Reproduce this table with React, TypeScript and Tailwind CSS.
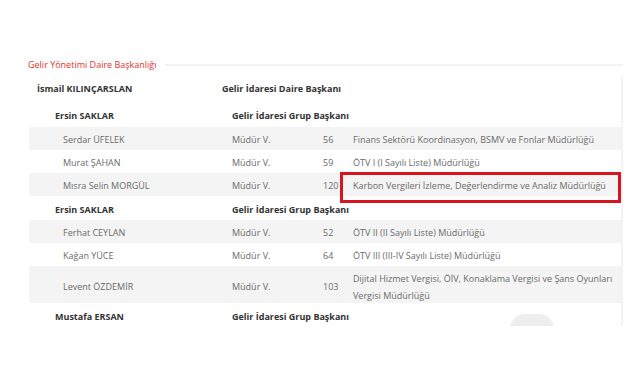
import React from "react";

type Row =
  | { kind: "head"; level: 0 | 1; name: string; title: string; tall?: boolean }
  | { kind: "unit"; name: string; title: string; no: string; unit: string[]; mark?: boolean; tall?: boolean };

const ROWS: Row[] = [
  { kind: "head", level: 0, name: "İsmail KILINÇARSLAN", title: "Gelir İdaresi Daire Başkanı" },
  { kind: "head", level: 1, name: "Ersin SAKLAR", title: "Gelir İdaresi Grup Başkanı", tall: true },
  { kind: "unit", name: "Serdar ÜFELEK", title: "Müdür V.", no: "56", unit: ["Finans Sektörü Koordinasyon, BSMV ve Fonlar Müdürlüğü"] },
  { kind: "unit", name: "Murat ŞAHAN", title: "Müdür V.", no: "59", unit: ["ÖTV I (I Sayılı Liste) Müdürlüğü"] },
  { kind: "unit", name: "Mısra Selin MORGÜL", title: "Müdür V.", no: "120", unit: ["Karbon Vergileri İzleme, Değerlendirme ve Analiz Müdürlüğü"], mark: true },
  { kind: "head", level: 1, name: "Ersin SAKLAR", title: "Gelir İdaresi Grup Başkanı" },
  { kind: "unit", name: "Ferhat CEYLAN", title: "Müdür V.", no: "52", unit: ["ÖTV II (II Sayılı Liste) Müdürlüğü"] },
  { kind: "unit", name: "Kağan YÜCE", title: "Müdür V.", no: "64", unit: ["ÖTV III (III-IV Sayılı Liste) Müdürlüğü"] },
  {
    kind: "unit",
    name: "Levent ÖZDEMİR",
    title: "Müdür V.",
    no: "103",
    unit: ["Dijital Hizmet Vergisi, ÖİV, Konaklama Vergisi ve Şans Oyunları", "Vergisi Müdürlüğü"],
    tall: true,
  },
  { kind: "head", level: 1, name: "Mustafa ERSAN", title: "Gelir İdaresi Grup Başkanı" },
];

function HeadRow({ row }: { row: Extract<Row, { kind: "head" }> }) {
  const top = row.level === 0;
  const h = top ? "h-[24px]" : row.tall ? "h-[26px] pt-[4px]" : "h-[24px] pt-[3px]";
  return (
    <div className={`flex items-center font-bold text-[#333] text-[9px] ${h}`}>
      <div className={top ? "w-[193px] pl-[8px]" : "w-[203px] pl-[26px]"}>{row.name}</div>
      <div>{row.title}</div>
    </div>
  );
}

function UnitRow({ row, shaded }: { row: Extract<Row, { kind: "unit" }>; shaded: boolean }) {
  return (
    <div
      className={`relative flex items-center text-[9px] text-[#6a6a6a] ${row.tall ? "h-[37px] pt-[4px]" : "h-[23px] pt-[2px]"} ${
        shaded ? "bg-[#f4f4f4]" : "bg-white"
      }`}
    >
      <div className="w-[203px] pl-[34px]">{row.name}</div>
      <div className="w-[91px]">{row.title}</div>
      <div className="w-[30px]">{row.no}</div>
      <div className="flex-1 leading-[17px]">
        {row.unit.map((l) => (
          <div key={l}>{l}</div>
        ))}
      </div>
      {row.mark && (
        <div className="absolute left-[311px] right-[0px] top-[-1px] bottom-[-7px] border-[3px] border-[#d8141f]" />
      )}
    </div>
  );
}

export default function App() {
  let shade = 0;
  return (
    <div className="w-[641px] h-[380px] bg-white overflow-hidden font-['Open_Sans',sans-serif]">
      <div className="pt-[54px] pl-[20px] pr-[18px]">
        <div className="flex items-center h-[22px]">
          <div className="px-[8px] text-[9px] text-[#e5322a] leading-[22px] bg-white">
            Gelir Yönetimi Daire Başkanlığı
          </div>
          <div className="flex-1 h-[2px] bg-[#f3f3f3]" />
        </div>
        <div className="ml-[9px] h-[250px] overflow-hidden border-r-2 border-[#f3f3f3] relative pt-[1px]">
          {ROWS.map((r, i) => {
            if (r.kind === "head") {
              shade = 0;
              return <HeadRow key={i} row={r} />;
            }
            const shaded = shade % 2 === 0;
            shade++;
            return <UnitRow key={i} row={r} shaded={shaded} />;
          })}
          <div className="absolute left-[481px] top-[238px] w-[44px] h-[30px] rounded-full bg-[#eeeeee]" />
        </div>
      </div>
    </div>
  );
}
